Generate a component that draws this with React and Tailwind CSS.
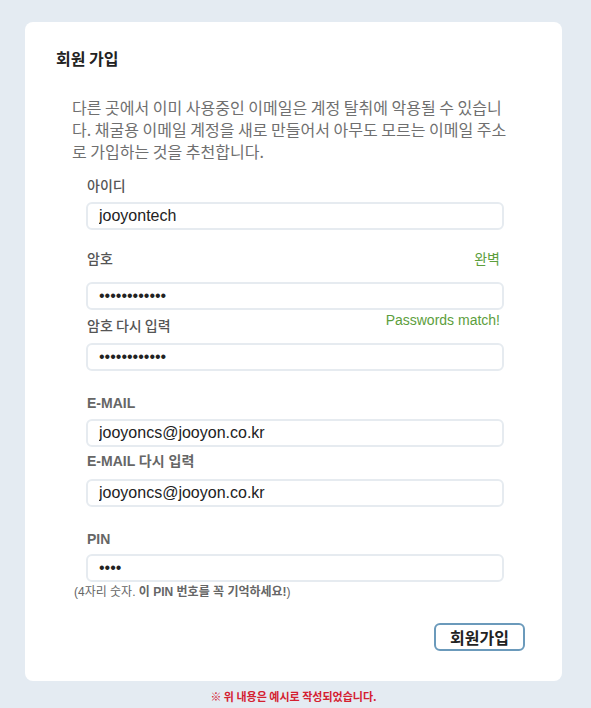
import React from 'react';

const font = { fontFamily: '"Liberation Sans", "Noto Sans CJK KR", sans-serif' };
const krFont = { fontFamily: '"Noto Sans CJK KR", "Liberation Sans", sans-serif' };

function Input({ type = 'text', value, className = '' }) {
  return (
    <input
      type={type}
      value={value}
      readOnly
      className={`block h-[28px] w-[418px] rounded-md border-2 border-[#e6ebf0] bg-white px-[11px] text-[16px] text-[#222] outline-none ${className}`}
    />
  );
}

export default function App() {
  return (
    <div className="min-h-[708px] bg-[#e4ebf2] pt-[22px]" style={font}>
      <div className="ml-[25px] w-[537px] rounded-lg bg-white pb-[30px] pl-[31px] pt-[24px]">
        <h2 className="text-[16px] font-bold leading-[24px] text-[#222]" style={krFont}>회원 가입</h2>

        <p className="ml-[16px] mt-[26px] w-[446px] text-[16px] leading-[22px] text-[#6f6f6f]" style={krFont}>
          다른 곳에서 이미 사용중인 이메일은 계정 탈취에 악용될 수 있습니다. 채굴용 이메일 계정을 새로 만들어서 아무도 모르는 이메일 주소로 가입하는 것을 추천합니다.
        </p>

        <div className="ml-[30px]">
          <label className="mt-[12px] block pl-[1px] text-[14px] font-medium leading-[22px] text-[#555]" style={krFont}>아이디</label>
          <Input value="jooyontech" className="mt-[6px]" />

          <div className="mt-[17px] flex w-[418px] items-center justify-between pl-[1px] pr-[4px]" style={krFont}>
            <label className="text-[14px] font-medium leading-[22px] text-[#555]">암호</label>
            <span className="text-[14px] leading-[18px] text-[#5c9e3c]">완벽</span>
          </div>
          <Input type="password" value="jooyontech12" className="mt-[13px]" />

          <div className="mt-[4px] flex w-[418px] items-start justify-between pl-[1px] pr-[4px]">
            <label className="text-[14px] font-medium leading-[22px] text-[#555]" style={krFont}>암호 다시 입력</label>
            <span className="-mt-[2px] text-[14px] leading-[16px] text-[#5c9e3c]">Passwords match!</span>
          </div>
          <Input type="password" value="jooyontech12" className="mt-[7px]" />

          <label className="mt-[22px] block pl-[1px] text-[14px] font-bold leading-[20px] text-[#666]">E-MAIL</label>
          <Input value="jooyoncs@jooyon.co.kr" className="mt-[6px]" />

          <label className="mt-[4px] block pl-[1px] text-[14px] font-bold leading-[20px] text-[#666]">E-MAIL 다시 입력</label>
          <Input value="jooyoncs@jooyon.co.kr" className="mt-[8px]" />

          <label className="mt-[22px] block pl-[1px] text-[14px] font-bold leading-[20px] text-[#666]">PIN</label>
          <Input type="password" value="1234" className="mt-[5px]" />
        </div>

        <p className="ml-[18px] mt-[2px] text-[12px] leading-[16px] text-[#666]">
          (4자리 숫자. <span className="font-bold">이 PIN 번호를 꼭 기억하세요!</span>)
        </p>

        <div className="mt-[23px] flex justify-end pr-[37px]">
          <button className="h-[28px] w-[91px] rounded-md border-2 border-[#6b9abb] bg-white text-[16px] font-bold leading-none text-[#222]" style={krFont}>
            회원가입
          </button>
        </div>
      </div>

      <p className="ml-[25px] mt-[7px] w-[537px] text-center text-[11px] font-bold leading-[16px] text-[#d42030]" style={krFont}>
        ※ 위 내용은 예시로 작성되었습니다.
      </p>
    </div>
  );
}
